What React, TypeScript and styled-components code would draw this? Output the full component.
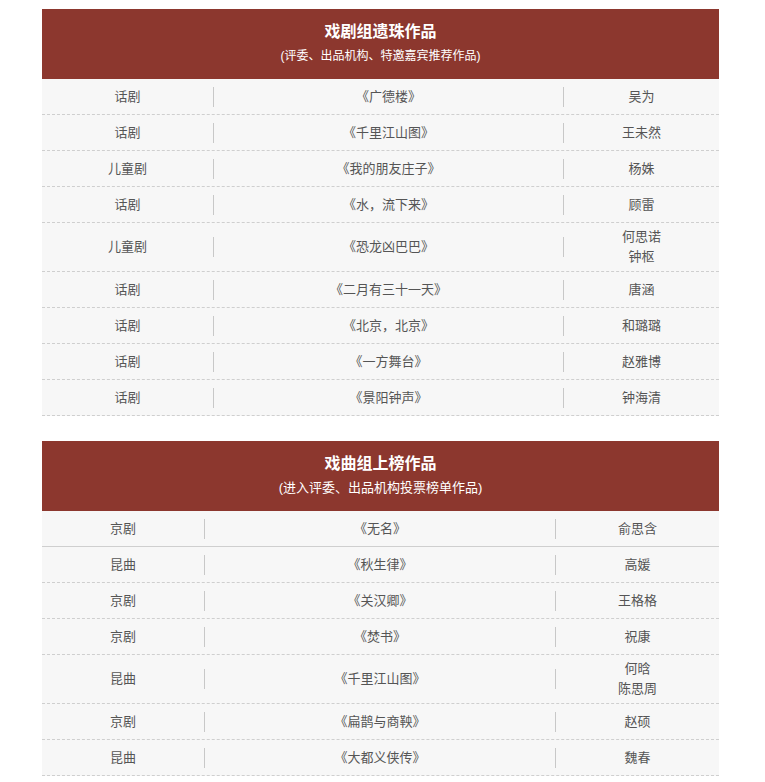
import styled, { createGlobalStyle } from "styled-components";

const GlobalStyle = createGlobalStyle`
	body {
		margin: 0;
		background: #fff;
		font-family: "Liberation Sans", "Noto Sans CJK SC", sans-serif;
		color: #555;
	}
`;

const Page = styled.main`
	padding: 9px 0 0 42px;
	display: flex;
	flex-direction: column;
	gap: 25px;
`;

const Board = styled.section`
	width: 677px;
	background: #f7f7f7;
`;

const Head = styled.header`
	background: #8c372e;
	color: #fff;
	text-align: center;
	padding: 11px 0 13px;
`;

const Title = styled.h2`
	margin: 0;
	font-size: 16px;
	font-weight: 700;
	line-height: 24px;
`;

const Note = styled.p<{ $size: number }>`
	margin: 2px 0 0;
	font-size: ${(props) => props.$size}px;
	line-height: 20px;
`;

const Row = styled.div<{ $cols: string; $solid?: boolean }>`
	display: grid;
	grid-template-columns: ${(props) => props.$cols};
	align-items: center;
	min-height: 36px;
	padding: 4px 0;
	box-sizing: border-box;
	border-bottom: 1px ${(props) => (props.$solid ? "solid" : "dashed")} #cfcfcf;
	font-size: 13px;
	line-height: 20px;
	text-align: center;
`;

const Cell = styled.div`
	white-space: pre-line;
`;

const WorkCell = styled.div`
	border-left: 1px solid #c8c8c8;
	border-right: 1px solid #c8c8c8;
`;

type Work = [string, string, string];

const dramaWorks: Work[] = [
	["话剧", "《广德楼》", "吴为"],
	["话剧", "《千里江山图》", "王未然"],
	["儿童剧", "《我的朋友庄子》", "杨姝"],
	["话剧", "《水，流下来》", "顾雷"],
	["儿童剧", "《恐龙凶巴巴》", "何思诺\n钟枢"],
	["话剧", "《二月有三十一天》", "唐涵"],
	["话剧", "《北京，北京》", "和璐璐"],
	["话剧", "《一方舞台》", "赵雅博"],
	["话剧", "《景阳钟声》", "钟海清"],
];

const operaWorks: Work[] = [
	["京剧", "《无名》", "俞思含"],
	["昆曲", "《秋生律》", "高媛"],
	["京剧", "《关汉卿》", "王格格"],
	["京剧", "《焚书》", "祝康"],
	["昆曲", "《千里江山图》", "何晗\n陈思周"],
	["京剧", "《扁鹊与商鞅》", "赵硕"],
	["昆曲", "《大都义侠传》", "魏春"],
];

function WorkBoard(props: {
	title: string;
	note: string;
	noteSize: number;
	cols: string;
	works: Work[];
	solidFirst?: boolean;
}) {
	return (
		<Board>
			<Head>
				<Title>{props.title}</Title>
				<Note $size={props.noteSize}>{props.note}</Note>
			</Head>
			{props.works.map(([genre, name, author], i) => (
				<Row key={i} $cols={props.cols} $solid={props.solidFirst && i === 0}>
					<Cell>{genre}</Cell>
					<WorkCell>{name}</WorkCell>
					<Cell>{author}</Cell>
				</Row>
			))}
		</Board>
	);
}

export default function App() {
	return (
		<>
			<GlobalStyle />
			<Page>
				<WorkBoard
					title="戏剧组遗珠作品"
					note="(评委、出品机构、特邀嘉宾推荐作品)"
					noteSize={12}
					cols="171px 351px 155px"
					works={dramaWorks}
				/>
				<WorkBoard
					title="戏曲组上榜作品"
					note="(进入评委、出品机构投票榜单作品)"
					noteSize={13}
					cols="162px 352px 163px"
					works={operaWorks}
					solidFirst
				/>
			</Page>
		</>
	);
}
